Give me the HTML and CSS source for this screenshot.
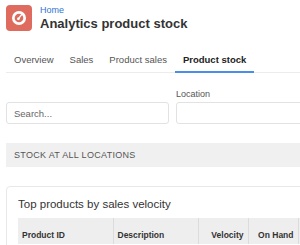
FILE: index.html
```html
<!DOCTYPE html>
<html lang="en">
<head>
    <meta charset="UTF-8">
    <meta name="viewport" content="width=device-width, initial-scale=1.0">
    <title>Analytics product stock</title>
    <link rel="stylesheet" href="styles.css">
</head>
<body>
    <div class="page">
        <div class="page-header">
            <div class="app-icon">
                <svg width="26" height="26" viewBox="0 0 26 26">
                    <circle cx="13" cy="13" r="7" fill="#fff"/>
                    <circle cx="13" cy="13" r="4.3" fill="#de6b5d"/>
                    <line x1="12.4" y1="13.8" x2="15.4" y2="9.8" stroke="#fff" stroke-width="1.4" stroke-linecap="round"/>
                    <circle cx="12.4" cy="13.8" r="1.4" fill="#fff"/>
                </svg>
            </div>
            <div class="page-heading">
                <a class="breadcrumb" href="#">Home</a>
                <h1 class="page-title">Analytics product stock</h1>
            </div>
        </div>

        <nav class="tabs">
            <a class="tab" href="#">Overview</a>
            <a class="tab" href="#">Sales</a>
            <a class="tab" href="#">Product sales</a>
            <a class="tab active" href="#">Product stock</a>
        </nav>

        <div class="filters">
            <div class="field">
                <input class="text-input" type="text" placeholder="Search...">
            </div>
            <div class="field">
                <label class="field-label">Location</label>
                <input class="text-input" type="text">
            </div>
        </div>

        <div class="section-band">Stock at all locations</div>

        <div class="card">
            <h2 class="card-title">Top products by sales velocity</h2>
            <table class="data-table">
                <thead>
                    <tr>
                        <th class="col-id">Product ID</th>
                        <th class="col-desc">Description</th>
                        <th class="col-num">Velocity</th>
                        <th class="col-num">On Hand</th>
                        <th class="col-num"></th>
                    </tr>
                </thead>
            </table>
        </div>
    </div>
</body>
</html>
```

FILE: styles.css
```css
html, body {
    margin: 0;
    overflow: hidden;
}
body {
    background: white;
    font-family: "Liberation Sans", Arial, sans-serif;
    color: #333;
}
.page {
    width: 560px;
    padding: 5px 0 0 6px;
}
.page-header {
    display: flex;
    gap: 8px;
}
.app-icon {
    width: 26px;
    height: 26px;
    border-radius: 4px;
    background: #de6b5d;
    flex-shrink: 0;
}
.app-icon svg {
    display: block;
}
.breadcrumb {
    display: block;
    font-size: 9px;
    line-height: 11px;
    color: #2f74d6;
    text-decoration: none;
}
.page-title {
    margin: 0;
    font-size: 13px;
    line-height: 16px;
    font-weight: bold;
    color: #333;
}
.tabs {
    display: flex;
    margin-top: 22px;
    border-bottom: 1px solid #ececec;
}
.tab {
    padding: 0 8px 5px;
    margin-bottom: -1px;
    font-size: 9.5px;
    line-height: 12px;
    color: #555;
    text-decoration: none;
    border-bottom: 2px solid transparent;
}
.tab.active {
    color: #222;
    font-weight: bold;
    border-bottom-color: #4a8ee6;
}
.filters {
    display: grid;
    grid-template-columns: 163px 240px;
    gap: 7px;
    align-items: end;
    margin-top: 16px;
}
.field-label {
    display: block;
    font-size: 9px;
    line-height: 11px;
    color: #555;
    margin-bottom: 2px;
}
.text-input {
    display: block;
    box-sizing: border-box;
    width: 100%;
    height: 22px;
    padding: 0 7px;
    border: 1px solid #e2e2e2;
    border-radius: 3px;
    font-family: inherit;
    font-size: 9.5px;
    color: #333;
    outline: none;
}
.text-input::placeholder {
    color: #666;
}
.section-band {
    margin-top: 19px;
    height: 24px;
    line-height: 24px;
    padding: 0 8px;
    background: #f0f0f0;
    font-size: 9px;
    letter-spacing: 0.3px;
    text-transform: uppercase;
    color: #555;
}
.card {
    margin-top: 19px;
    padding: 9px 11px 12px;
    border: 1px solid #e8e8e8;
    border-radius: 4px;
}
.card-title {
    margin: 0 0 6px;
    font-size: 11.5px;
    line-height: 16px;
    font-weight: normal;
    color: #333;
}
.data-table {
    border-collapse: collapse;
    table-layout: fixed;
    width: 330px;
    font-size: 8.5px;
}
.data-table th {
    height: 26px;
    box-sizing: border-box;
    padding: 0 4px 4px;
    vertical-align: bottom;
    text-align: left;
    line-height: 10px;
    font-weight: bold;
    color: #333;
    background: #eeeeee;
    border-right: 1px solid #dcdcdc;
}
.data-table th.col-id {
    width: 95px;
}
.data-table th.col-desc {
    width: 85px;
}
.data-table th.col-num {
    width: 50px;
    text-align: right;
}
```
